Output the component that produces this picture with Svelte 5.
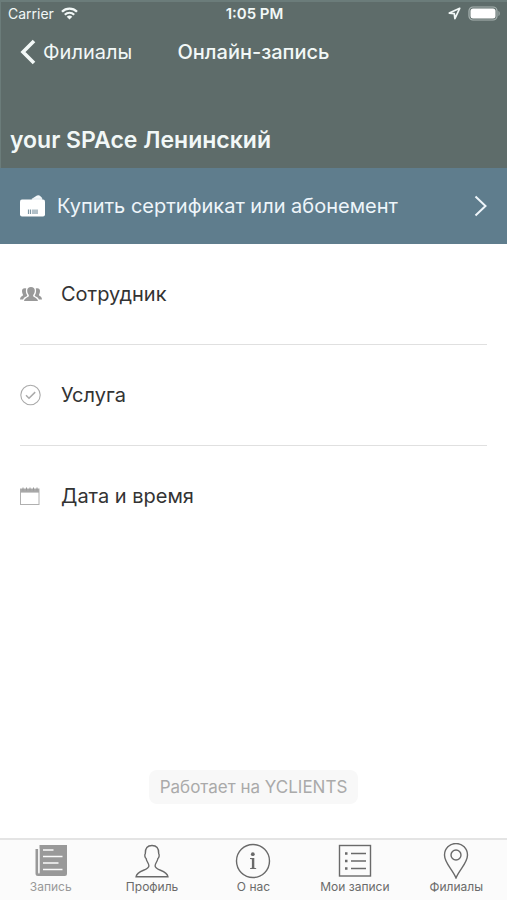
<script>
	const carrier = 'Carrier';
	const time = '1:05 PM';

	const steps = [
		{ id: 'staff', label: 'Сотрудник' },
		{ id: 'service', label: 'Услуга' },
		{ id: 'date', label: 'Дата и время' }
	];

	const tabs = [
		{ id: 'booking', label: 'Запись' },
		{ id: 'profile', label: 'Профиль' },
		{ id: 'about', label: 'О нас' },
		{ id: 'records', label: 'Мои записи' },
		{ id: 'branches', label: 'Филиалы' }
	];

	let activeTab = $state('booking');
</script>

<div class="app">
	<header class="header">
		<div class="status-bar">
			<div class="status-left">
				<span>{carrier}</span>
				<svg class="wifi" viewBox="0 0 17 13" width="17" height="13" fill="none" stroke="currentColor">
					<path d="M1 4.7a10.6 10.6 0 0 1 15 0" stroke-width="2.3" />
					<path d="M3.8 7.7a6.7 6.7 0 0 1 9.4 0" stroke-width="2.2" />
					<path d="M8.5 12.6 5.7 9.8a4 4 0 0 1 5.6 0z" fill="currentColor" stroke="none" />
				</svg>
			</div>
			<time class="status-time">{time}</time>
			<div class="status-right">
				<svg viewBox="0 0 13 13" width="13" height="13" fill="none" stroke="currentColor" stroke-width="1.7" stroke-linejoin="round">
					<path d="M11.7 1.3 1.3 6.1l5 .5.6 5.1z" />
				</svg>
				<svg viewBox="0 0 33 15" width="33" height="15">
					<rect x="1" y="1" width="28" height="13" rx="4" fill="none" stroke="#a9b4b2" stroke-width="1.2" />
					<rect x="2.5" y="2.5" width="25" height="10" rx="2.5" fill="#fff" />
					<path d="M30.5 5c1.6.6 1.6 4.4 0 5z" fill="#a9b4b2" />
				</svg>
			</div>
		</div>

		<nav class="nav-bar">
			<button class="back-btn">
				<svg viewBox="0 0 16 26" width="16" height="26" fill="none" stroke="currentColor" stroke-width="3.6">
					<path d="M14 2 3 13l11 11" />
				</svg>
				Филиалы
			</button>
			<h1>Онлайн-запись</h1>
		</nav>

		<h2>your SPAce Ленинский</h2>
	</header>

	<main class="content">
		<button class="banner">
			<svg viewBox="0 0 25 22" width="25" height="22">
				<path d="M11.5 4 17 .6q1.8-.9 3.2.3l2 2.100v2h-10z" fill="#f4f8fa" />
				<path d="M12 4.200h10" stroke="#b9c9d2" stroke-width=".6" />
				<rect x="0" y="4.500" width="25" height="17" rx="2" fill="#fff" />
				<path d="M8.500 14.500v4.500M10.500 14.500v4.500M13 14.500v4.500M15 14.500v4.500M17 14.500v4.500" stroke="#7f97a4" stroke-width="1.2" />
			</svg>
			<span>Купить сертификат или абонемент</span>
			<svg class="chevron" viewBox="0 0 13 22" width="13" height="22" fill="none" stroke="currentColor" stroke-width="2">
				<path d="M1.5 1.5 11.5 11l-10 9.5" />
			</svg>
		</button>

		<ul class="steps">
			{#each steps as step (step.id)}
				<li>
					<button class="step">
						{#if step.id === 'staff'}
							<svg viewBox="0 0 22 22" width="22" height="22" fill="#999">
								<path d="M8.8 13.2c.3-.9-.1-1.3-.5-2C7.700 10.300 7.200 9.500 7.200 7.500 7.200 5.200 8.600 4 11 4s3.800 1.200 3.800 3.500c0 2-.5 2.800-1.100 3.700-.4.700-.8 1.100-.5 2 .3.800 4.300 1.700 4.800 4.800H4c.5-3.100 4.500-4 4.800-4.800z" />
								<path d="M6.300 5.500C3.700 4.500 1.900 5.800 2 8.100c.1 1.700.4 2.400.8 3.100.5.900.1 1.400-.7 1.800C1 13.600.2 14.300 0 16.500h3.100c.6-1.800 2.300-2.700 4-3.500.4-.6-.2-1.200-.6-2C5.900 9.700 5.600 7.300 6.300 5.500z" />
								<path d="M15.700 5.500c2.600-1 4.400.3 4.300 2.600-.1 1.700-.4 2.400-.8 3.100-.5.900-.1 1.400.7 1.800 1.100.6 1.900 1.300 2.100 3.500h-3.100c-.6-1.800-2.300-2.700-4-3.500-.4-.6.2-1.200.6-2 .6-1.300.9-3.700.2-5.500z" />
							</svg>
						{:else if step.id === 'service'}
							<svg viewBox="0 0 22 22" width="22" height="22" fill="none" stroke="#aaa">
								<circle cx="10.5" cy="11" r="9.7" stroke-width="1.1" />
								<path d="m6 11.300 3 3 6.200-6.200" stroke-width="1.5" />
							</svg>
						{:else}
							<svg viewBox="0 0 22 22" width="22" height="22" fill="none" stroke="#b0b0b0">
								<rect x=".5" y="4" width="18.5" height="15.500" />
								<path d="M.5 5.800H19" stroke="#a8a8a8" stroke-width="3.6" />
								<path d="M3 2.500v3M6.500 2.500v3M10 2.500v3M13.500 2.500v3M17 2.500v3" stroke="#999" />
							</svg>
						{/if}
						<span>{step.label}</span>
					</button>
				</li>
			{/each}
		</ul>

		<div class="powered">
			<button class="powered-btn">Работает на YCLIENTS</button>
		</div>
	</main>

	<nav class="tab-bar">
		{#each tabs as tab (tab.id)}
			<button class="tab" class:active={activeTab === tab.id} onclick={() => (activeTab = tab.id)}>
				<svg viewBox="0 0 36 36" width="36" height="36" fill="none" stroke="currentColor" stroke-width="1.4">
					{#if tab.id === 'booking'}
						<path d="M6.5 2H34v29q0 2-2 2H5q-2.500 0-2.500-2.500V6h2.800v24.500h1.200z" fill="currentColor" stroke="none" />
						<path d="M5.900 5.500v24.300" stroke="#fafafa" stroke-width="1.1" />
						<path d="M10 7h10.500M10 13.500h19.500M10 20h15.500M10 26.500h19.500" stroke="#fafafa" stroke-width="1.7" />
					{:else if tab.id === 'profile'}
						<path d="M14.900 23c.2-2.500-2.200-4-2.800-7.500-1.300-.8-1.700-4-.8-4.800C11 5 13.500 2.500 18 2.500s7 2.500 6.700 8.200c.9.8.5 4-.8 4.800-.6 3.500-3 5-2.800 7.500.3 4.600 11.800 4 12.800 10.700H2.100C3.100 27 14.600 27.600 14.900 23z" />
					{:else if tab.id === 'about'}
						<circle cx="18" cy="18" r="16.5" />
						<circle cx="17.8" cy="11.2" r="1.9" fill="currentColor" stroke="none" />
						<path d="M15 15h4.300v9.800l1.900.4v.8H15v-.8l1.900-.4v-8.600L15 15.900z" fill="currentColor" stroke="none" />
					{:else if tab.id === 'records'}
						<rect x="2.5" y="2.500" width="31" height="30.500" />
						<path d="M14 10.500h15M14 18h15M14 25.500h15" />
						<path d="M8 10.500h2.500M8 18h2.500M8 25.500h2.500" stroke-width="2.5" />
					{:else}
						<path d="M18 35C14.500 26.500 6.500 20 6.500 12a11.500 11.500 0 0 1 23 0c0 8-8 14.500-11.500 23z" />
						<circle cx="18" cy="12" r="5" />
					{/if}
				</svg>
				<span>{tab.label}</span>
			</button>
		{/each}
	</nav>
</div>

<style>
	:global(body) {
		margin: 0;
		background: #fff;
	}
	.app {
		min-height: 100vh;
		display: flex;
		flex-direction: column;
		font-family: Inter, 'Liberation Sans', sans-serif;
		color: #333;
	}
	button {
		border: none;
		background: none;
		padding: 0;
		font: inherit;
		color: inherit;
		cursor: pointer;
	}
	svg {
		display: block;
		flex-shrink: 0;
	}

	/* Header */
	.header {
		background: #5e6c6a;
		color: #f2f8f7;
		padding-bottom: 12px;
		box-shadow: inset 1px 2px 0 #6b7c7a;
	}
	.status-bar {
		display: grid;
		grid-template-columns: 1fr auto 1fr;
		align-items: center;
		height: 27px;
		padding: 0 6px 0 8px;
		font-size: 14px;
	}
	.status-left,
	.status-right {
		display: flex;
		align-items: center;
		gap: 7px;
	}
	.status-right {
		justify-content: flex-end;
	}
	.status-time {
		font-size: 15px;
		font-weight: 600;
	}
	.nav-bar {
		display: grid;
		grid-template-columns: 1fr auto 1fr;
		align-items: center;
		height: 49px;
		padding: 0 20px;
	}
	.back-btn {
		display: flex;
		align-items: center;
		gap: 7px;
		font-size: 20px;
	}
	h1 {
		margin: 0;
		font-size: 20px;
		font-weight: 500;
	}
	h2 {
		margin: 48px 10px 0;
		font-size: 23px;
		line-height: 32px;
		font-weight: 600;
	}

	/* Certificate banner */
	.content {
		flex: 1;
		display: flex;
		flex-direction: column;
	}
	.banner {
		display: flex;
		align-items: center;
		gap: 12px;
		height: 76px;
		padding: 0 20px;
		background: #5f7d8d;
		color: #eef5fa;
		font-size: 20px;
		text-align: left;
	}
	.chevron {
		margin-left: auto;
	}

	/* Booking steps */
	.steps {
		list-style: none;
		margin: 0;
		padding: 0 20px;
	}
	.steps li + li {
		border-top: 1px solid #e0e0e0;
	}
	.step {
		display: flex;
		align-items: center;
		gap: 19px;
		width: 100%;
		height: 100px;
		font-size: 20px;
	}

	.powered {
		margin-top: auto;
		padding: 32px 20px 34px;
		text-align: center;
	}
	.powered-btn {
		padding: 6px 11px;
		border-radius: 8px;
		background: #f8f8f8;
		color: #aaa;
		font-size: 17px;
		line-height: 22px;
	}

	/* Bottom tabs */
	.tab-bar {
		display: grid;
		grid-template-columns: repeat(5, 1fr);
		border-top: 2px solid #e4e4e4;
		background: #fbfbfb;
	}
	.tab {
		display: flex;
		flex-direction: column;
		align-items: center;
		padding: 3px 0 5px;
		color: #6a6a6a;
		font-size: 12px;
		line-height: 16px;
	}
	.tab.active {
		color: #999;
	}
</style>
